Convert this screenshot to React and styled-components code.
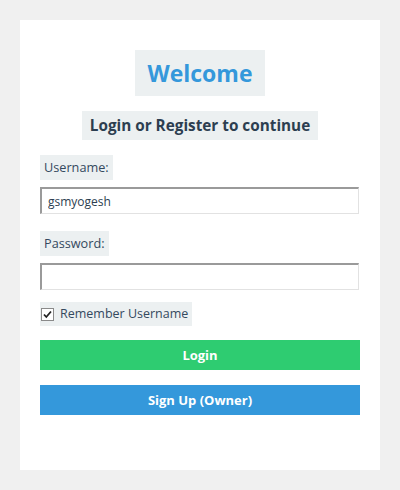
import React, { useState } from 'react'
import styled, { createGlobalStyle } from 'styled-components'

const GlobalStyle = createGlobalStyle`
  html, body {
    margin: 0;
    padding: 0;
    background: #f0f0f0;
  }
  body {
    font-family: 'Open Sans', 'Noto Sans', sans-serif;
  }
`

const Page = styled.div`
  padding: 20px;
  height: 490px;
  box-sizing: border-box;
`

const Card = styled.div`
  background: #ffffff;
  height: 450px;
  box-sizing: border-box;
  padding: 30px 20px;
  display: flex;
  flex-direction: column;
`

const Title = styled.h1`
  align-self: center;
  margin: 0;
  padding: 8px 12px;
  background: #ecf0f1;
  color: #3498db;
  font-size: 23px;
  line-height: 30px;
  font-weight: 700;
`

const Subtitle = styled.h2`
  align-self: center;
  margin: 15px 0 0;
  padding: 4px 8px;
  background: #ecf0f1;
  color: #2c3e50;
  font-size: 15.3px;
  line-height: 21px;
  font-weight: 700;
`

const Label = styled.label`
  align-self: flex-start;
  margin-top: ${p => p.$top}px;
  padding: 3px 4px;
  background: #ecf0f1;
  color: #34495e;
  font-size: 12.7px;
  line-height: 19px;
`

const Input = styled.input`
  margin-top: 7px;
  width: 319px;
  height: 27px;
  box-sizing: border-box;
  padding: 0 6px;
  border: 1px solid #e2e2e2;
  border-top: 2px solid #9a9a9a;
  border-left: 2px solid #9a9a9a;
  background: #fff;
  color: #2c3e50;
  font-family: inherit;
  font-size: 12px;
  outline: none;
`

const CheckRow = styled.label`
  align-self: flex-start;
  margin-top: 12px;
  padding: 2px 4px 2px 1px;
  background: #ecf0f1;
  display: flex;
  align-items: center;
  gap: 6px;
  color: #34495e;
  font-size: 12.5px;
  line-height: 20px;
  cursor: pointer;
`

const Box = styled.span`
  width: 11px;
  height: 11px;
  border: 1px solid #8a8a8a;
  background: #fff;
  display: flex;
  align-items: center;
  justify-content: center;
`

const Button = styled.button`
  margin-top: ${p => p.$top}px;
  width: 320px;
  height: 30px;
  border: none;
  background: ${p => p.$color};
  color: #fff;
  font-family: inherit;
  font-size: 13px;
  font-weight: 700;
  cursor: pointer;
`

export default function App() {
  const [user, setUser] = useState('gsmyogesh')
  const [pass, setPass] = useState('')
  const [remember, setRemember] = useState(true)

  return (
    <>
      <GlobalStyle />
      <Page>
        <Card>
          <Title>Welcome</Title>
          <Subtitle>Login or Register to continue</Subtitle>

          <Label $top={15}>Username:</Label>
          <Input value={user} onChange={e => setUser(e.target.value)} />

          <Label $top={17}>Password:</Label>
          <Input
            type="password"
            value={pass}
            onChange={e => setPass(e.target.value)}
          />

          <CheckRow onClick={() => setRemember(!remember)}>
            <Box>
              {remember && (
                <svg width="9" height="9" viewBox="0 0 9 9">
                  <path
                    d="M1 4.5 L3.3 7 L8 1.5"
                    fill="none"
                    stroke="#222"
                    strokeWidth="1.8"
                  />
                </svg>
              )}
            </Box>
            Remember Username
          </CheckRow>

          <Button $top={14} $color="#2ecc71">Login</Button>
          <Button $top={15} $color="#3498db">Sign Up (Owner)</Button>
        </Card>
      </Page>
    </>
  )
}
